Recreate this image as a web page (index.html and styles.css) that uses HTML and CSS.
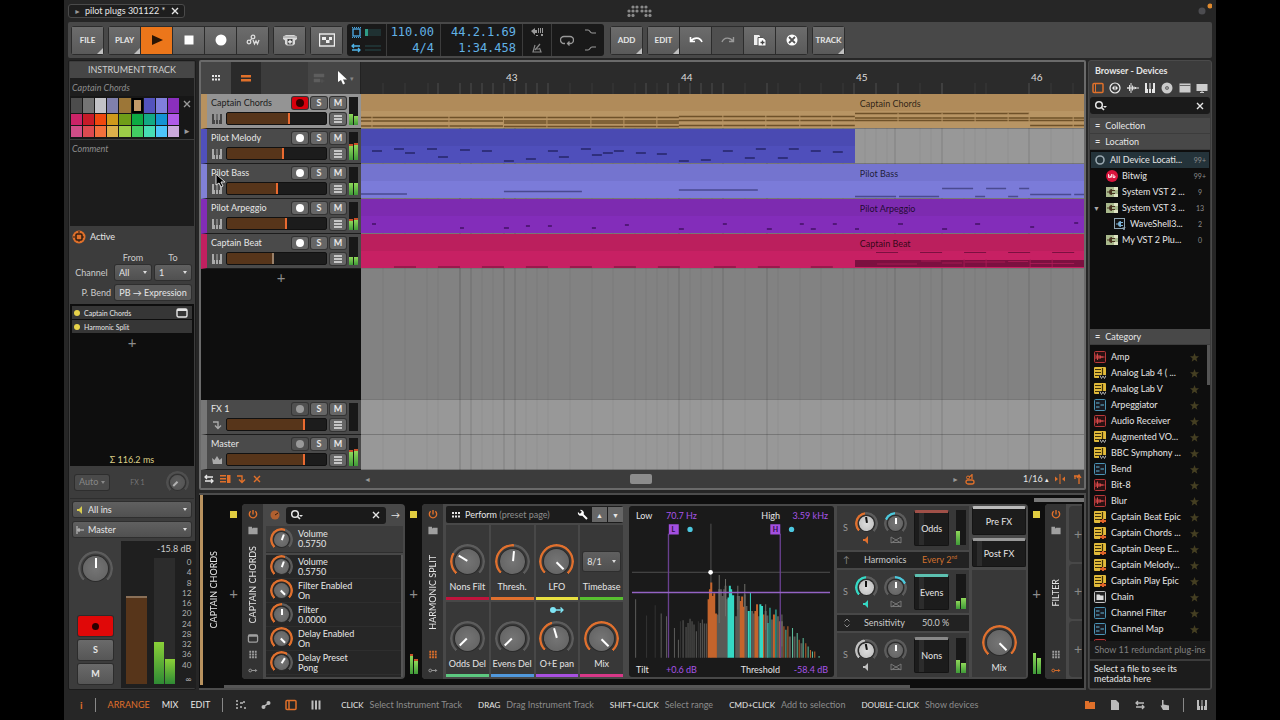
FILE: index.html
```html
<!DOCTYPE html>
<html lang="en">
<head>
<meta charset="utf-8">
<title>pilot plugs 301122</title>
<link rel="stylesheet" href="styles.css">
</head>
<body>
<svg class="defs" aria-hidden="true">
  <symbol id="keys" viewBox="0 0 12 12"><path d="M1 1h2v6h1v4H1zM5 7h.5V1h1v6H7v4H5zM9 1h2v10H8V7h1z" fill="currentColor"/></symbol>
  <symbol id="folder" viewBox="0 0 12 12"><path d="M1 2h4v1.500h1V3h5v7H1z" fill="currentColor"/></symbol>
  <symbol id="power" viewBox="0 0 12 12"><path d="M6 1v5M3.500 2.500a4 4 0 1 0 5 0" fill="none" stroke="currentColor" stroke-width="1.500"/></symbol>
  <symbol id="search" viewBox="0 0 14 12"><circle cx="5" cy="5" r="3.300" fill="none" stroke="currentColor" stroke-width="1.500"/><path d="M7 7l3 3" stroke="currentColor" stroke-width="1.600"/><path d="M9 6h4l-2 2z" fill="currentColor"/></symbol>
  <symbol id="cross" viewBox="0 0 12 12"><path d="M3 3l6 6M9 3l-6 6" stroke="currentColor" stroke-width="1.400"/></symbol>
  <symbol id="window" viewBox="0 0 12 12"><rect x="1" y="2" width="10" height="8" rx="1.500" fill="none" stroke="currentColor" stroke-width="1.400"/><path d="M1 3h10" stroke="currentColor" stroke-width="2"/></symbol>
  <symbol id="dots" viewBox="0 0 12 12"><path d="M2 2h2v2H2zM5 2h2v2H5zM8 2h2v2H8zM2 5h2v2H2zM5 5h2v2H5zM8 5h2v2H8zM2 8h2v2H2zM5 8h2v2H5zM8 8h2v2H8z" fill="currentColor"/></symbol>
  <symbol id="grid6" viewBox="0 0 12 12"><path d="M2 3h2v2H2zM5 3h2v2H5zM8 3h2v2H8zM2 6.500h2v2H2zM5 6.500h2v2H5zM8 6.500h2v2H8z" fill="currentColor"/></symbol>
  <symbol id="link" viewBox="0 0 12 12"><circle cx="3" cy="6" r="1.500" fill="none" stroke="currentColor"/><path d="M4.500 6H10M8.500 4.500L10 6 8.500 7.500" fill="none" stroke="currentColor"/></symbol>
  <symbol id="bars" viewBox="0 0 12 12"><path d="M2 3h8M2 6h8M2 9h8" stroke="currentColor" stroke-width="1.500"/></symbol>
  <symbol id="down" viewBox="0 0 12 12"><path d="M2 3h5v6M4 6.500l3 3 3-3" fill="none" stroke="currentColor" stroke-width="1.400"/></symbol>
  <symbol id="swap" viewBox="0 0 12 12"><path d="M2 4h8M4 2L2 4l2 2M10 8H2M8 6l2 2-2 2" fill="none" stroke="currentColor" stroke-width="1.300"/></symbol>
  <symbol id="speaker" viewBox="0 0 8 8"><path d="M1 3h2l3-3v8L3 5H1z" fill="currentColor"/></symbol>
  <symbol id="pan" viewBox="0 0 12 8"><path d="M1 1v6l5-3zM11 1v6L6 4z" fill="none" stroke="currentColor"/><path d="M1 6h10v1H1z" fill="currentColor"/></symbol>
  <symbol id="star" viewBox="0 0 12 12"><path d="M6 0l1.600 4.200 4.400.2-3.400 2.800 1.200 4.300L6 9.100l-3.800 2.400 1.200-4.300L0 4.400l4.400-.2z" fill="currentColor"/></symbol>
  <symbol id="dev-audio" viewBox="0 0 12 12"><rect x=".5" y=".5" width="11" height="11" rx="1" fill="#2a1112" stroke="#b8393a"/><path d="M2 3.500V8M3.500 2.500V9M5 4v4M6.500 4.500v3M8 5v2M2 6h8.500" stroke="#d24646" fill="none"/></symbol>
  <symbol id="dev-note" viewBox="0 0 12 12"><rect x=".5" y=".5" width="11" height="11" rx="1" fill="#181b22" stroke="#4b93b4"/><path d="M2 4h3.500M2 8h3.500M6.500 6H10" stroke="#63b7da" stroke-width="1.200"/></symbol>
  <symbol id="dev-inst" viewBox="0 0 12 12"><rect width="12" height="11" rx="1" fill="#e0b93a"/><path d="M1 2.500h6M1 5.500h6M1 8.500h5M8.500 1v7" stroke="#3c300b" stroke-width="1.200"/><path d="M5 8h7v4H5z" fill="#111"/><path d="M6 8.500l1.500 3L9 9l1.500 2.500L12 8.500" fill="none" stroke="#aaa"/></symbol>
  <symbol id="dev-epic" viewBox="0 0 12 12"><rect width="12" height="12" rx="1" fill="#e0b93a"/><path d="M1 2.500h6M1 5.500h6M1 8.500h5M8.500 1v7" stroke="#3c300b" stroke-width="1.200"/><path d="M6 8h6v4H6z" fill="#2a1508"/><path d="M6 10h6M9 8v4" stroke="#e0642a" stroke-width="2"/></symbol>
  <symbol id="dev-chain" viewBox="0 0 12 12"><rect x=".5" y=".5" width="11" height="11" rx="1" fill="#222" stroke="#c4c4c4"/><path d="M2.500 3.500h3l1 1h3V9h-7z" fill="#ddd"/></symbol>
  <symbol id="vst" viewBox="0 0 12 12"><path d="M0 1h12v10H0z" fill="#a9b98c"/><path d="M8 1h4v3H8zM8 8h4v3H8z" fill="#dfe4c2"/><path d="M1 6h2M6 4.500h3M6 7.500h3" stroke="#4a3420"/><path d="M6 3v6a3 3 0 0 1 0-6z" fill="#4a3420"/></symbol>
</svg>

<div class="app">
  <header class="titlebar">
    <div class="tab"><span class="tab-play">►</span><span>pilot plugs 301122 *</span><button class="plain" aria-label="Close project"><svg class="ic"><use href="#cross"/></svg></button></div>
    <svg class="logo" viewBox="0 0 26 12" fill="#8a8a8a"><circle cx="6" cy="2" r="1.600"/><circle cx="10" cy="2" r="1.600"/><circle cx="15" cy="2" r="1.600"/><circle cx="19" cy="2" r="1.600"/><circle cx="2" cy="6" r="1.600"/><circle cx="6" cy="6" r="1.600"/><circle cx="10" cy="6" r="1.600"/><circle cx="15" cy="6" r="1.600"/><circle cx="19" cy="6" r="1.600"/><circle cx="23" cy="6" r="1.600"/><circle cx="2" cy="10.400" r="1.600"/><circle cx="6" cy="10.400" r="1.600"/><circle cx="19" cy="10.400" r="1.600"/><circle cx="23" cy="10.400" r="1.600"/></svg>
    <svg class="lights" viewBox="0 0 14 14"><circle cx="4" cy="8" r="3.500" fill="#4c4c50"/><circle cx="12" cy="3" r="2.500" fill="#e08a2e"/></svg>
  </header>

  <nav class="toolbar">
    <div class="group"><button class="tb more">FILE</button></div>
    <div class="group">
      <button class="tb more">PLAY</button>
      <button class="tb on" aria-label="Play"><svg viewBox="0 0 16 16"><path d="M3 3l11 5-11 5z" fill="#2a1505"/></svg></button>
      <button class="tb" aria-label="Stop"><svg viewBox="0 0 16 16"><path d="M3.500 3.500h9v9h-9z" fill="#fff"/></svg></button>
      <button class="tb" aria-label="Record"><svg viewBox="0 0 16 16"><circle cx="8" cy="8" r="5.500" fill="#fff"/></svg></button>
      <button class="tb" aria-label="Automation write"><svg viewBox="0 0 16 16" fill="none" stroke="#ddd" stroke-width="1.300"><circle cx="4" cy="10" r="1.800"/><circle cx="8" cy="5" r="1.800"/><path d="M5.200 8.600l1.600-2.200M8 8l1.500 4L11 9l1.500 3L14 8"/></svg></button>
    </div>
    <div class="group"><button class="tb" aria-label="Launcher overdub"><svg viewBox="0 0 16 16"><path d="M1 4.500L4 3h8l3 1.500V7l-2 1.500V12l-2 1.500H5L3 12V8.500L1 7z" fill="#d8d8d8"/><path d="M1 5h14" stroke="#999"/><path d="M5.500 7h5v5.500h-5z" fill="#444"/><path d="M8 7.800v4M6 9.800h4" stroke="#fff" stroke-width="1.200"/></svg></button></div>
    <div class="group"><button class="tb" aria-label="Panels"><svg viewBox="0 0 16 16"><rect x=".5" y="2" width="15" height="12" fill="none" stroke="#eee" stroke-width="1.400"/><path d="M3 5h4v3h3V5h3v3h-2.500v3H7V8H3z" fill="#eee"/></svg></button></div>

    <div class="display">
      <div class="cell load"><svg viewBox="0 0 30 28"><rect x="2" y="3" width="7" height="7" fill="none" stroke="#4aa3dc" stroke-width="1.400"/><path d="M1 1.500h9M1 11.500h9" stroke="#4aa3dc" stroke-dasharray="1 1"/><path d="M1 20h8M3 18l-2 2 2 2M1 24h8M7 22l2 2-2 2" fill="none" stroke="#4fb4e8" stroke-width="1.300"/><path d="M14 3h16v7H14zM14 19h16v2H14zM14 23h16v2H14z" fill="#1f3132"/><path d="M14 3h3v7h-3z" fill="#2f9c86"/></svg></div>
      <div class="cell"><span>110.00</span><span>4/4</span></div>
      <div class="cell wide"><span>44.2.1.69</span><span>1:34.458</span></div>
      <div class="cell icons"><svg viewBox="0 0 14 12"><path d="M1 5l4-3v2h2v3H5v2zM8 2h1v5H8zM10 2h1v5h-1zM12 2h1v5h-1zM6 9h2v1H6zM11 8h2v2h-2z" fill="#999"/></svg><svg viewBox="0 0 14 12"><path d="M5 3L3 10h8L9.500 6M5 8l5-6M5 7h4" fill="none" stroke="#888" stroke-width="1.200"/></svg></div>
      <div class="cell loop"><svg viewBox="0 0 14 12"><path d="M5 9.500H4a3.500 3.500 0 0 1 0-7h6a3.500 3.500 0 0 1 0 7H8M9.500 7.500L7.500 9.500l2 2" fill="none" stroke="#999" stroke-width="1.300"/></svg><svg viewBox="0 0 12 28"><path d="M1 4h3c2 0 2 3 4 3h4M1 24h3c2 0 2-3 4-3h4" fill="none" stroke="#999" stroke-width="1.200"/></svg></div>
    </div>

    <div class="group"><button class="tb more">ADD</button></div>
    <div class="group">
      <button class="tb more">EDIT</button>
      <button class="tb" aria-label="Undo"><svg viewBox="0 0 16 16"><path d="M3 9c3-4 9-4 11 1M2.500 5v4.500H7" fill="none" stroke="#fff" stroke-width="1.600"/></svg></button>
      <button class="tb" aria-label="Redo" disabled><svg viewBox="0 0 16 16"><path d="M13 9C10 5 4 5 2 10M13.500 5v4.500H9" fill="none" stroke="#999" stroke-width="1.400"/></svg></button>
      <button class="tb" aria-label="Duplicate"><svg viewBox="0 0 16 16"><path d="M2 3h5l1 1v9H2z" fill="#eee"/><path d="M6 5.500h5l3 2.500v6H6z" fill="#fff" stroke="#555"/><path d="M10.500 8.500v4M8.500 10.500h4" stroke="#444" stroke-width="1.300"/></svg></button>
      <button class="tb" aria-label="Delete"><svg viewBox="0 0 16 16"><circle cx="8" cy="8" r="5.500" fill="#fff"/><path d="M5 5l6 6M11 5l-6 6" stroke="#555" stroke-width="1.800"/></svg></button>
    </div>
    <div class="group"><button class="tb more">TRACK</button></div>
  </nav>

  <main class="work">
    <aside class="inspector">
      <h2>INSTRUMENT TRACK</h2>
      <input class="track-title" aria-label="Track name" value="Captain Chords">
      <div class="palette">
        <div class="swatches">
          <i style="background:#4c4c4c"></i><i style="background:#747474"></i><i style="background:#c3c3c7"></i><i style="background:#8080ac"></i><i style="background:#9c7637"></i><i class="sel" style="background:#c39a68"></i><i style="background:#5353bd"></i><i style="background:#8080dc"></i><i style="background:#8a2fbe"></i>
          <i style="background:#cb2367"></i><i style="background:#c81a28"></i><i style="background:#f0480e"></i><i style="background:#cf9a1b"></i><i style="background:#6f9d18"></i><i style="background:#0daa43"></i><i style="background:#12aa84"></i><i style="background:#1493d4"></i><i style="background:#b05ae8"></i>
          <i style="background:#d04d87"></i><i style="background:#dd4a50"></i><i style="background:#f2703c"></i><i style="background:#dcb04b"></i><i style="background:#9ccc48"></i><i style="background:#42cc62"></i><i style="background:#47ddb4"></i><i style="background:#4dc5fb"></i><i style="background:#cbaadc"></i>
        </div>
        <div class="palette-side"><svg class="ic"><use href="#cross"/></svg><span>►</span></div>
      </div>
      <textarea class="comment" aria-label="Comment" placeholder="Comment"></textarea>
      <div class="active-row"><svg viewBox="0 0 14 14"><circle cx="7" cy="7" r="6.500" fill="#e0702a"/><rect x="4" y="4" width="6" height="6" rx="1" fill="none" stroke="#2c1a10" stroke-width="1.500"/><path d="M7 1.500v2M7 10.500v2M1.500 7h2M10.500 7h2" stroke="#2c1a10" stroke-width="2" stroke-dasharray="1"/></svg><span>Active</span></div>
      <div class="routing">
        <span></span><span class="mid">From</span><span class="mid">To</span>
        <span class="lab">Channel</span>
        <label class="drop"><select aria-label="Channel from"><option>All</option></select></label>
        <label class="drop"><select aria-label="Channel to"><option>1</option></select></label>
        <span class="lab low">P. Bend</span><button class="bend low">PB → Expression</button>
      </div>
      <div class="chain">
        <div class="chain-row"><i></i><span>Captain Chords</span><svg class="ic"><use href="#window"/></svg></div>
        <div class="chain-row"><i></i><span>Harmonic Split</span></div>
        <button class="plus">+</button>
        <div class="latency">Σ 116.2 ms</div>
      </div>
      <div class="send">
        <label class="drop dim"><select aria-label="Send mode"><option>Auto</option></select></label>
        <span>FX 1</span>
        <label class="knob s faded" style="--e:0;--p:0"><input type="range" aria-label="FX 1 send"></label>
      </div>
      <div class="io">
        <label class="drop in"><svg class="io-ic yellow"><use href="#speaker"/></svg><select aria-label="Input"><option>All ins</option></select></label>
        <label class="drop"><svg class="io-ic" viewBox="0 0 8 8"><path d="M1 0v8M1 4h7M3 2v4" stroke="#ccc" fill="none"/></svg><select aria-label="Output"><option>Master</option></select></label>
      </div>
      <div class="mixer">
        <div class="mix-left">
          <label class="knob l" style="--e:0;--p:.5"><input type="range" aria-label="Pan"></label>
          <button class="arm" aria-label="Arm"></button>
          <button class="sm">S</button>
          <button class="sm">M</button>
        </div>
        <div class="mix-right">
          <div class="db">-15.8 dB</div>
          <div class="mix-cols">
            <div class="vol"></div>
            <div class="bigmeter"><i style="height:33%"></i><i style="height:20%"></i></div>
            <ol class="scale"><li>0</li><li>4</li><li>8</li><li>12</li><li>16</li><li>20</li><li>24</li><li>28</li><li>32</li><li>36</li><li>40</li><li>∞</li></ol>
          </div>
        </div>
      </div>
    </aside>

    <section class="center">
      <div class="arranger">
        <div class="arr-head">
          <div class="head-tools">
            <button aria-label="Clip launcher"><svg class="ic"><use href="#grid6"/></svg></button>
            <button class="lit" aria-label="Arranger"><svg class="ic" viewBox="0 0 12 12"><path d="M1 3h10v2.500H1zM1 7h10v2.500H1z" fill="currentColor"/></svg></button>
            <span class="fill"></span>
            <button class="faint" aria-label="Follow"><svg class="ic" viewBox="0 0 12 12"><path d="M1 2h10v3H1zM1 7h6v3H1zM9 7v4M7.500 9h4" fill="currentColor" stroke="currentColor" stroke-width=".5"/></svg></button>
            <button class="pointer" aria-label="Pointer tool"><svg viewBox="0 0 12 14"><path d="M2 0v11l3-2 2 4.500 2-1L7 8.500h4z" fill="#fff"/></svg><small>▾</small></button>
          </div>
          <div class="ruler">
            <div class="bars"><span></span><span>43</span><span>44</span><span>45</span><span>46</span></div>
            <svg viewBox="0 0 723 12" preserveAspectRatio="none"><path d="M22 0v12M44 0v12M67 0v12M209 0v12M231 0v12M252 0v12M274 0v12M296 0v12M384 0v12M417 0v12M439 0v12M460 0v12M482 0v12M559 0v12M581 0v12M614 0v12M625 0v12M690 0v12M712 0v12" stroke="#3c3c3c"/><path d="M77 0v12M99 0v12M110 0v12M121 0v12M132 0v12M143 0v12M154 0v12M165 0v12M176 0v12M187 0v12M285 0v12M307 0v12M318 0v12M329 0v12M340 0v12M351 0v12M362 0v12M406 0v12M493 0v12M515 0v12M537 0v12M581 0v12M668 0v12" stroke="#505050"/></svg>
          </div>
        </div>

        <div class="arr-body">
          <div class="tracks">
            <div class="track selected" style="--c:#b8925f"><span class="tname">Captain Chords</span><button class="rec armed" aria-label="Arm"></button><button>S</button><button>M</button><svg class="tic"><use href="#keys"/></svg><input type="range" class="fader" aria-label="Volume" value="63" style="--v:63%"><button aria-label="Menu"><svg class="ic"><use href="#bars"/></svg></button><div class="meter"><i style="height:40%"></i><i style="height:32%"></i></div></div>
            <div class="track" style="--c:#5050bb"><span class="tname">Pilot Melody</span><button class="rec" aria-label="Arm"></button><button>S</button><button>M</button><svg class="tic"><use href="#keys"/></svg><input type="range" class="fader" aria-label="Volume" value="57" style="--v:57%"><button aria-label="Menu"><svg class="ic"><use href="#bars"/></svg></button><div class="meter hot"><i style="height:58%"></i><i style="height:60%"></i></div></div>
            <div class="track" style="--c:#8080d6"><span class="tname">Pilot Bass</span><button class="rec" aria-label="Arm"></button><button>S</button><button>M</button><svg class="tic"><use href="#keys"/></svg><input type="range" class="fader" aria-label="Volume" value="51" style="--v:51%"><button aria-label="Menu"><svg class="ic"><use href="#bars"/></svg></button><div class="meter"><i style="height:42%"></i><i style="height:42%"></i></div>
              <svg class="cursor" viewBox="0 0 12 15"><path d="M1 1v11l3-2 2 4 2-1-2-4h4z" fill="#000" stroke="#ddd"/></svg></div>
            <div class="track" style="--c:#822db8"><span class="tname">Pilot Arpeggio</span><button class="rec" aria-label="Arm"></button><button>S</button><button>M</button><svg class="tic"><use href="#keys"/></svg><input type="range" class="fader" aria-label="Volume" value="60" style="--v:60%"><button aria-label="Menu"><svg class="ic"><use href="#bars"/></svg></button><div class="meter hot"><i style="height:38%"></i><i style="height:42%"></i></div></div>
            <div class="track" style="--c:#c22060"><span class="tname">Captain Beat</span><button class="rec" aria-label="Arm"></button><button>S</button><button>M</button><svg class="tic"><use href="#keys"/></svg><input type="range" class="fader grey" aria-label="Volume" value="46" style="--v:46%"><button aria-label="Menu"><svg class="ic"><use href="#bars"/></svg></button><div class="meter"><i style="height:30%"></i><i style="height:28%"></i></div></div>
            <button class="plus add-track">+</button>
            <div class="track" style="--c:#777"><span class="tname">FX 1</span><button class="rec off" aria-label="Arm"></button><button>S</button><button>M</button><svg class="tic"><use href="#down"/></svg><input type="range" class="fader" aria-label="Volume" value="78" style="--v:78%"><button aria-label="Menu"><svg class="ic"><use href="#bars"/></svg></button><div class="meter"></div></div>
            <div class="track" style="--c:#777"><span class="tname">Master</span><button class="rec off" aria-label="Arm"></button><button>S</button><button>M</button><svg class="tic" viewBox="0 0 12 12"><path d="M1 4l2.500 2L6 2l2.500 4L11 4v6H2z" fill="currentColor"/></svg><input type="range" class="fader" aria-label="Volume" value="78" style="--v:78%"><button aria-label="Menu"><svg class="ic"><use href="#bars"/></svg></button><div class="meter hot"><i style="height:56%"></i><i style="height:60%"></i></div></div>
          </div>

          <div class="timeline">
            <svg class="gridlines" viewBox="0 0 723 100" preserveAspectRatio="none"><path d="M22 0v100M44 0v100M66 0v100M77 0v100M99 0v100M121 0v100M132 0v100M165 0v100M176 0v100M187 0v100M209 0v100M231 0v100M252 0v100M274 0v100M285 0v100M296 0v100M307 0v100M329 0v100M340 0v100M351 0v100M384 0v100M417 0v100M439 0v100M460 0v100M482 0v100M493 0v100M504 0v100M515 0v100M526 0v100M559 0v100M570 0v100M603 0v100M614 0v100M625 0v100M647 0v100M690 0v100M712 0v100" stroke="#000" stroke-opacity=".05"/><path d="M99 0v100M110 0v100M143 0v100M154 0v100M318 0v100M362 0v100M406 0v100M534 0v100M581 0v100M668 0v100" stroke="#000" stroke-opacity=".15"/></svg>
            <div class="lane">
              <div class="clip a" style="--c:#b89564;--h:#b08b5a"><b></b><svg viewBox="0 0 494 17" preserveAspectRatio="none"><path d="M0 6.500H142M0 10H142M0 15H142M143 6.500H318M143 10H318M143 12H318M143 15.500H318M318 5.500H494M318 9.500H494M318 14.500H494" stroke="#6e5129" stroke-width="1.300"/><path d="M11 5v12M88 5v12M186 5v12M230 5v12M263 5v12M296 5v12M362 4v13M405 4v13M439 4v13M471 4v13" stroke="#b89564"/></svg></div>
              <div class="clip b" style="--c:#b89564;--h:#b08b5a"><b>Captain Chords</b><svg viewBox="0 0 229 17" preserveAspectRatio="none"><path d="M0 2.500H174M0 7H229M0 9.500H229M175 14.500H229" stroke="#6e5129" stroke-width="1.400"/><path d="M43 2v12M87 2v12M120 2v12M153 2v12M174 2v14M218 5v12" stroke="#b89564"/></svg></div>
            </div>
            <div class="lane">
              <div class="clip a" style="--c:#4f4fbb;--h:#4a4ab2"><b></b><svg viewBox="0 0 494 17" preserveAspectRatio="none"><path d="M11 5h10M33 3h10M44 7h10M66 3h10M77 11h10M99 4h10M121 5h10M143 15h10M165 13h10M187 5h10M198 11h10M220 3h10M231 9h10M242 7h10M253 5h10M275 7h10M296 8h10M318 15h10M340 14h10M362 5h10M384 12h10M395 3h10M417 12h10M428 3h10M450 5h10M472 6h10" stroke="#26266a" stroke-width="1.300"/></svg></div>
            </div>
            <div class="lane">
              <div class="clip a" style="--c:#7b7bd9;--h:#7474cf"><b></b><svg viewBox="0 0 494 17" preserveAspectRatio="none"><path d="M0 13h46M143 10.500h78M318 9h79" stroke="#4a4a90" stroke-width="1.300"/></svg></div>
              <div class="clip b" style="--c:#7b7bd9;--h:#7474cf"><b>Pilot Bass</b><svg viewBox="0 0 229 17" preserveAspectRatio="none"><path d="M0 15.500h41M44 15.500h40M87 7.500h31M120 15.500h10M131 7.500h20M153 15.500h10M164 7.500h10M175 13.500h41M219 13.500h10" stroke="#4a4a90" stroke-width="1.500"/></svg></div>
            </div>
            <div class="lane">
              <div class="clip a" style="--c:#832dba;--h:#7d2bb0"><b></b><svg viewBox="0 0 494 17" preserveAspectRatio="none"><path d="M11 8h4M99 12h4M143 12h5M165 10h4M187 10h4M231 12h4M264 9h4M318 13h5M362 8h4M406 13h5M439 8h4M450 13h5M472 8h4" stroke="#431166" stroke-width="1.300"/></svg></div>
              <div class="clip b" style="--c:#832dba;--h:#7d2bb0"><b>Pilot Arpeggio</b><svg viewBox="0 0 229 17" preserveAspectRatio="none"><path d="M0 13h4M43 8h5M87 13h5M120 8h5M175 11h4M219 7h4" stroke="#431166" stroke-width="1.300"/></svg></div>
            </div>
            <div class="lane">
              <div class="clip a" style="--c:#c72063;--h:#bb1f5d"><b></b><svg viewBox="0 0 494 17" preserveAspectRatio="none"><path d="M33 16h22M77 16h22M121 16h22M165 16h22M209 16h22M253 16h22M297 16h22M353 16h22M397 16h22M450 16h22" stroke="#701038"/></svg></div>
              <div class="clip b" style="--c:#c72063;--h:#bb1f5d"><b>Captain Beat</b><svg viewBox="0 0 229 17" preserveAspectRatio="none"><path d="M0 9h229v7H0z" fill="#7c1040"/><path d="M21 1.500h22M65 1.500h22M109 1.500h22M153 1.500h22M197 1.500h22" stroke="#7c1040"/><path d="M22 13h40M66 10h20M87 12h20M110 11h40M153 10.500h20M175 12.500h44M109 8v8M131 8v8M175 8v8M197 8v8" stroke="#b31c58" stroke-width=".8"/></svg></div>
            </div>
            <div class="void"></div>
            <div class="lane"></div>
            <div class="lane"></div>
          </div>
        </div>

        <div class="arr-foot">
          <div class="foot-tools"><svg class="ic"><use href="#swap"/></svg><svg class="ic lit" viewBox="0 0 12 12"><path d="M1 2h6v1.500H1zM1 5h6v1.500H1zM1 8h6v1.500H1zM8 2h3.500v8H8z" fill="currentColor"/></svg><svg class="ic lit"><use href="#down"/></svg><svg class="ic lit"><use href="#cross"/></svg></div>
          <span class="arrow">◄</span><div class="hscroll"><i></i></div><span class="arrow">►</span>
          <svg class="ic lit" viewBox="0 0 12 12"><rect x="2" y="7" width="8" height="4" rx="2" fill="none" stroke="currentColor" stroke-width="1.300"/><circle cx="4" cy="4.500" r="1.500" fill="none" stroke="currentColor"/><path d="M5 4l3-2M8 1v5" fill="none" stroke="currentColor" stroke-width="1.300"/></svg>
          <span class="snap">1/16 <small>▴</small></span>
          <svg class="ic lit" viewBox="0 0 12 12"><path d="M5.500 1h1v10h-1zM1 3.500L4 6 1 8.500zM11 3.500L8 6l3 2.500z" fill="currentColor"/></svg>
          <svg class="ic lit" viewBox="0 0 12 12"><path d="M3 3h5v8M6 5l2-3 2 3M4 3v3" fill="none" stroke="currentColor" stroke-width="1.300"/></svg>
        </div>
      </div>

      <div class="devices">
        <i class="minimap"></i>
        <div class="rack">
          <div class="rack-name"><span class="vert">CAPTAIN CHORDS</span></div>
          <div class="slot"><i class="led"></i><button class="plus">+</button><div class="meter none"></div></div>

          <article class="device">
            <div class="spine"><svg class="ic lit"><use href="#power"/></svg><svg class="ic"><use href="#folder"/></svg><span class="vert">CAPTAIN CHORDS</span><svg class="ic"><use href="#window"/></svg><svg class="ic"><use href="#dots"/></svg><svg class="ic"><use href="#link"/></svg></div>
            <div class="plugin">
              <div class="psearch"><svg class="ic lit" viewBox="0 0 12 12"><circle cx="6" cy="6" r="4.500" fill="#b06030"/><path d="M6 6l3-2" stroke="#3a1c0a"/></svg><label class="sbox"><svg class="sic"><use href="#search"/></svg><input type="search" aria-label="Search parameters"><svg class="ic"><use href="#cross"/></svg></label><span>→</span></div>
              <div class="param first"><label class="knob s" style="--e:.575;--p:.575"><input type="range" aria-label="Volume"></label><span>Volume<br>0.5750</span></div>
              <div class="params">
                <div class="param"><label class="knob s" style="--e:.575;--p:.575"><input type="range" aria-label="Volume"></label><span>Volume<br>0.5750</span></div>
                <div class="param"><label class="knob s" style="--e:1;--p:1"><input type="range" aria-label="Filter Enabled"></label><span>Filter Enabled<br>On</span></div>
                <div class="param"><label class="knob s" style="--e:.5;--p:.5"><input type="range" aria-label="Filter"></label><span>Filter<br>0.0000</span></div>
                <div class="param"><label class="knob s" style="--e:1;--p:1"><input type="range" aria-label="Delay Enabled"></label><span>Delay Enabled<br>On</span></div>
                <div class="param"><label class="knob s" style="--e:.62;--p:.62"><input type="range" aria-label="Delay Preset"></label><span>Delay Preset<br>Pong</span></div>
              </div>
            </div>
          </article>

          <div class="slot"><i class="led"></i><button class="plus">+</button><div class="meter none hot"><i style="height:90%"></i><i style="height:70%"></i></div></div>

          <article class="device grow">
            <div class="spine"><svg class="ic lit"><use href="#power"/></svg><svg class="ic"><use href="#folder"/></svg><span class="vert">HARMONIC SPLIT</span><svg class="ic lit"><use href="#dots"/></svg><svg class="ic"><use href="#link"/></svg></div>
            <div class="remote">
              <div class="page"><svg class="ic"><use href="#grid6"/></svg><span>Perform <em>(preset page)</em></span><svg class="ic" viewBox="0 0 12 12"><path d="M4 4l6 6" stroke="#fff" stroke-width="2"/><path d="M1 3l2 2 2-2-2-2a3 3 0 1 1-2 2z" fill="#fff"/></svg><button>▲</button><button>▼</button></div>
              <div class="pads">
                <div class="pad" style="--u:#c0143c"><label class="knob l" style="--e:.28;--p:.28"><input type="range" aria-label="Nons Filt"></label><span>Nons Filt</span></div>
                <div class="pad" style="--u:#e0702e"><label class="knob l" style="--e:.52;--p:.52"><input type="range" aria-label="Thresh."></label><span>Thresh.</span></div>
                <div class="pad" style="--u:#e8e040"><label class="knob l" style="--e:1;--p:1"><input type="range" aria-label="LFO"></label><span>LFO</span></div>
                <div class="pad" style="--u:#58c030"><label class="drop time"><select aria-label="Timebase"><option>8/1</option></select></label><span>Timebase</span></div>
                <div class="pad" style="--u:#5cc880"><label class="knob l" style="--e:0;--p:0"><input type="range" aria-label="Odds Delay"></label><span>Odds Del</span></div>
                <div class="pad" style="--u:#5098dc"><label class="knob l" style="--e:0;--p:0"><input type="range" aria-label="Evens Delay"></label><span>Evens Del</span></div>
                <div class="pad" style="--u:#a850e0"><svg class="mod" viewBox="0 0 14 6"><circle cx="3" cy="3" r="3" fill="#7fe4f4"/><path d="M3 3h10M10.500 .5L13 3l-2.500 2.500" fill="none" stroke="#7fe4f4" stroke-width="1.300"/></svg><label class="knob l" style="--e:.44;--p:.44"><input type="range" aria-label="O+E pan"></label><span>O+E pan</span></div>
                <div class="pad" style="--u:#d83888"><label class="knob l" style="--e:1;--p:1"><input type="range" aria-label="Mix"></label><span>Mix</span></div>
              </div>
            </div>
            <div class="spectrum">
              <div class="srow"><span>Low</span><output>70.7 Hz</output><span class="r">High</span><output>3.59 kHz</output></div>
              <svg viewBox="15 104 618 406" preserveAspectRatio="none">
                <path d="M262 106V503M24 250H621" stroke="#6a6a6a" stroke-width="2"/>
                <g stroke-width="3" fill="none">
                  <path stroke="#333" d="M68 378V503M94 348V503M170 395V503M224 395V503M343 350V503"/>
                  <path stroke="#5c5c5a" d="M35 330V503M112 372V503M128 380V503M152 415V503M164 450V503M178 392V503M187 412V503M193 400V503M199 388V503M205 395V503M211 405V503M218 425V503M230 400V503M236 390V503M242 402V503M248 402V503"/>
                  <path stroke="#5a5955" stroke-width="6" d="M282 375V503M287 300V503M292 300V503M297 320V503M302 300V503M306 290V503M310 330V503M338 380V503M343 320V503M347 320V503M364 315V503M369 350V503M386 365V503M391 372V503M406 380V503M427 365V503M432 378V503M446 390V503M464 380V503M476 395V503M500 440V503M514 440V503M535 460V503"/>
                  <path stroke="#6e6d68" d="M287 258V400M306 270V380M343 290V360M364 285V360M427 345V420M476 375V470"/>
                  <path stroke="#c4642c" stroke-width="6" d="M255 330V503M259 300V503M263 280V503M268 320V503M272 312V503M277 372V503M352 335V503M356 322V503M360 352V503M396 365V503M401 345V503M420 375V503M452 375V503M470 395V503"/>
                  <path stroke="#35d8c4" stroke-width="6" d="M315 325V503M319 290V503M323 300V503M329 318V503M376 365V503M411 345V503M416 350V503"/>
                  <path stroke="#35d8c4" d="M381 310V503M440 355V503M458 360V503M434 400V503"/>
                  <path stroke="#c4642c" d="M482 410V503M494 410V503M528 450V503M548 460V503M562 480V503M575 485V503"/>
                  <path stroke="#5fc4a2" d="M488 420V503M508 415V503M522 430V503M540 445V503M555 470V503M568 485V503M588 498V503"/>
                </g>
                <path d="M134 136V503M471 136V503" stroke="#69408f" stroke-width="4"/>
                <path d="M24 310H621" stroke="#9463c4" stroke-width="4"/>
                <path d="M135 108h30v30h-30zM441 108h30v30h-30z" fill="#a34fe0"/>
                <text x="143" y="131">L</text><text x="448" y="131">H</text>
                <circle cx="199" cy="123" r="8" fill="#4cc8e0"/><circle cx="505" cy="123" r="8" fill="#4cc8e0"/><circle cx="261" cy="250" r="7" fill="#fff"/>
              </svg>
              <div class="srow"><span>Tilt</span><output>+0.6 dB</output><span class="r">Threshold</span><output>-58.4 dB</output></div>
            </div>
            <div class="bands">
              <div class="band" style="--k:#e0702e"><button class="solo">S</button><div class="kb"><label class="knob s white" style="--e:.47;--p:.47"><input type="range" aria-label="Odds level"></label><svg><use href="#speaker"/></svg></div><div class="kb"><label class="knob s pan" style="--s:.25;--e:.5;--p:.5"><input type="range" aria-label="Odds pan"></label><svg class="panic"><use href="#pan"/></svg></div><button class="layer" style="--t:#a05048">Odds</button><div class="meter"><i style="height:42%"></i><i style="height:0"></i></div></div>
              <div class="brow"><span class="bi">↑</span><span>Harmonics</span><span class="org">Every 2<sup>nd</sup></span></div>
              <div class="band" style="--k:#35d8c4"><button class="solo">S</button><div class="kb"><label class="knob s white" style="--e:.5;--p:.5"><input type="range" aria-label="Evens level"></label><svg><use href="#speaker"/></svg></div><div class="kb"><label class="knob s pan" style="--s:.5;--e:.75;--p:.5"><input type="range" aria-label="Evens pan"></label><svg class="panic"><use href="#pan"/></svg></div><button class="layer" style="--t:#5cc0b0">Evens</button><div class="meter"><i style="height:22%"></i><i style="height:32%"></i></div></div>
              <div class="brow"><svg class="updown" viewBox="0 0 8 12"><path d="M1.500 4.500L4 2l2.500 2.500M1.500 7.500L4 10l2.500-2.500" fill="none" stroke="#888"/></svg><span>Sensitivity</span><span>50.0 %</span></div>
              <div class="band" style="--k:#c0c0c0"><button class="solo">S</button><div class="kb"><label class="knob s white" style="--e:.46;--p:.46"><input type="range" aria-label="Nons level"></label><svg><use href="#speaker"/></svg></div><div class="kb"><label class="knob s pan" style="--e:0;--p:.5"><input type="range" aria-label="Nons pan"></label><svg class="panic"><use href="#pan"/></svg></div><button class="layer" style="--t:#888">Nons</button><div class="meter"><i style="height:36%"></i><i style="height:28%"></i></div></div>
            </div>
            <div class="fxcol">
              <button class="layer flat" style="--t:#bbb">Pre FX</button>
              <button class="layer" style="--t:#999">Post FX</button>
              <div class="mixbox"><label class="knob l" style="--e:1;--p:1"><input type="range" aria-label="Mix"></label><span>Mix</span></div>
            </div>
          </article>

          <div class="slot"><i class="led"></i><button class="plus">+</button><div class="meter none"><i style="height:95%"></i><i style="height:75%"></i></div></div>

          <article class="device cut">
            <div class="spine"><svg class="ic lit"><use href="#power"/></svg><svg class="ic"><use href="#folder"/></svg><span class="vert">FILTER</span><svg class="ic"><use href="#dots"/></svg><svg class="ic lit"><use href="#link"/></svg></div>
            <div class="stubs"><span>+</span><span>+</span><span>+</span></div>
          </article>
        </div>
        <div class="rackscroll"><i></i></div>
      </div>
    </section>

    <aside class="browser">
      <h2>Browser - Devices</h2>
      <div class="kinds">
        <button class="sel" aria-label="Devices"><svg viewBox="0 0 12 12"><rect x="1" y="1.500" width="10" height="9" rx="1" fill="none" stroke="#e0702a" stroke-width="1.500"/><path d="M3.500 2v8" stroke="#e0702a"/></svg></button>
        <button aria-label="Presets"><svg viewBox="0 0 12 12"><circle cx="6" cy="6" r="5" fill="none" stroke="#eee" stroke-width="1.200"/><path d="M5.500 3.500v5L3 6zM6.500 3.500v5L9 6z" fill="#eee"/></svg></button>
        <button aria-label="Samples"><svg viewBox="0 0 12 12"><path d="M1 5v2M2.500 3v6M4 1v10M5.500 3.500v5M7 4.500v3M8.500 5v2M0 6h12" stroke="#ddd"/></svg></button>
        <button aria-label="Multisamples"><svg><use href="#keys"/></svg></button>
        <button aria-label="Music"><svg viewBox="0 0 12 12"><circle cx="6" cy="6" r="5.500" fill="#ccc"/><circle cx="6" cy="6" r="1.800" fill="#444"/><circle cx="6" cy="6" r=".8" fill="#eee"/></svg></button>
        <button aria-label="Clips"><svg viewBox="0 0 12 12"><path d="M.5 1.500h11v9H.5z" fill="#ccc"/><path d="M.5 3.500h11" stroke="#666"/></svg></button>
        <button aria-label="Files"><svg viewBox="0 0 12 12"><path d="M.5 2h11v7H.5zM4 10h4v1H4z" fill="#ccc"/><path d="M5.500 8.500h1V11h-1z" fill="#ccc"/></svg></button>
      </div>
      <label class="sbox"><svg class="sic"><use href="#search"/></svg><input type="search" aria-label="Search browser"><svg class="ic"><use href="#cross"/></svg></label>
      <h3><i>=</i>Collection</h3>
      <h3><i>=</i>Location</h3>
      <ul class="locations">
        <li class="sel"><svg viewBox="0 0 12 12"><circle cx="6" cy="6" r="4" fill="none" stroke="#9aa8b0" stroke-width="1.600"/></svg><span>All Device Locati...</span><small>99+</small></li>
        <li class="in1"><svg viewBox="0 0 12 12"><circle cx="6" cy="6" r="6" fill="#d8143c"/><path d="M2.500 4v3.500h2V6h-2M5.500 4v3.500M7 4v3.500h2V6H7" fill="none" stroke="#fff" stroke-width=".8"/></svg><span>Bitwig</span><small>99+</small></li>
        <li class="in1"><svg><use href="#vst"/></svg><span>System VST 2 ...</span><small>9</small></li>
        <li class="in1 open"><svg><use href="#vst"/></svg><span>System VST 3 ...</span><small>13</small></li>
        <li class="in2"><svg viewBox="0 0 12 12"><rect x=".5" y=".5" width="10" height="10" fill="#111" stroke="#8fa6b4"/><path d="M2 6h2M7 4.500h2M7 7.500h2" stroke="#7db4d8"/><path d="M7 3v6a3 3 0 0 1 0-6z" fill="#7db4d8"/><path d="M9 9l1 3 1-3" stroke="#8fa6b4" fill="none"/></svg><span>WaveShell3...</span><small>2</small></li>
        <li class="in1"><svg><use href="#vst"/></svg><span>My VST 2 Plu...</span><small>0</small></li>
      </ul>
      <h3><i>=</i>Category</h3>
      <div class="catbox">
        <ul class="cats">
          <li><svg><use href="#dev-audio"/></svg><span>Amp</span><svg class="st"><use href="#star"/></svg></li>
          <li><svg><use href="#dev-inst"/></svg><span>Analog Lab 4 ( ...</span><svg class="st"><use href="#star"/></svg></li>
          <li><svg><use href="#dev-inst"/></svg><span>Analog Lab V</span><svg class="st"><use href="#star"/></svg></li>
          <li><svg><use href="#dev-note"/></svg><span>Arpeggiator</span><svg class="st"><use href="#star"/></svg></li>
          <li><svg><use href="#dev-audio"/></svg><span>Audio Receiver</span><svg class="st"><use href="#star"/></svg></li>
          <li><svg><use href="#dev-inst"/></svg><span>Augmented VO...</span><svg class="st"><use href="#star"/></svg></li>
          <li><svg><use href="#dev-inst"/></svg><span>BBC Symphony ...</span><svg class="st"><use href="#star"/></svg></li>
          <li><svg><use href="#dev-note"/></svg><span>Bend</span><svg class="st"><use href="#star"/></svg></li>
          <li><svg><use href="#dev-audio"/></svg><span>Bit-8</span><svg class="st"><use href="#star"/></svg></li>
          <li><svg><use href="#dev-audio"/></svg><span>Blur</span><svg class="st"><use href="#star"/></svg></li>
          <li><svg><use href="#dev-epic"/></svg><span>Captain Beat Epic</span><svg class="st"><use href="#star"/></svg></li>
          <li><svg><use href="#dev-epic"/></svg><span>Captain Chords ...</span><svg class="st"><use href="#star"/></svg></li>
          <li><svg><use href="#dev-epic"/></svg><span>Captain Deep E...</span><svg class="st"><use href="#star"/></svg></li>
          <li><svg><use href="#dev-epic"/></svg><span>Captain Melody...</span><svg class="st"><use href="#star"/></svg></li>
          <li><svg><use href="#dev-epic"/></svg><span>Captain Play Epic</span><svg class="st"><use href="#star"/></svg></li>
          <li><svg><use href="#dev-chain"/></svg><span>Chain</span><svg class="st"><use href="#star"/></svg></li>
          <li><svg><use href="#dev-note"/></svg><span>Channel Filter</span><svg class="st"><use href="#star"/></svg></li>
          <li><svg><use href="#dev-note"/></svg><span>Channel Map</span><svg class="st"><use href="#star"/></svg></li>
          <li><svg><use href="#dev-audio"/></svg><span></span></li>
        </ul>
        <i class="vscroll"></i>
      </div>
      <button class="redundant">Show 11 redundant plug-ins</button>
      <p class="meta">Select a file to see its metadata here</p>
    </aside>
  </main>

  <footer class="status">
    <b class="info">i</b><i class="sep"></i>
    <button class="cur">ARRANGE</button><button>MIX</button><button>EDIT</button><i class="sep"></i>
    <div class="views">
      <svg viewBox="0 0 12 12"><path d="M1 2h2M1 5.500h2M1 9h2M5 4h3M5 8h2M9 2v2M9 9h2" stroke="#bbb" stroke-width="1.500"/></svg>
      <svg viewBox="0 0 12 12"><circle cx="3.500" cy="8" r="2" fill="#bbb"/><circle cx="8.500" cy="4" r="2" fill="#bbb"/><path d="M3 8l6-4" stroke="#bbb" stroke-width="1.500"/></svg>
      <svg viewBox="0 0 12 12"><rect x="1" y="1.500" width="10" height="9" rx="1" fill="none" stroke="#e0702a" stroke-width="1.500"/><path d="M4 2v8" stroke="#e0702a" stroke-width="1.500"/></svg>
      <svg viewBox="0 0 12 12"><path d="M1.500 1.500h2v9h-2zM5 1.500h2v9H5zM8.500 1.500h2v9h-2z" fill="#bbb"/></svg>
    </div>
    <dl class="hints">
      <div><dt>CLICK</dt><dd>Select Instrument Track</dd></div>
      <div><dt>DRAG</dt><dd>Drag Instrument Track</dd></div>
      <div><dt>SHIFT+CLICK</dt><dd>Select range</dd></div>
      <div><dt>CMD+CLICK</dt><dd>Add to selection</dd></div>
      <div><dt>DOUBLE-CLICK</dt><dd>Show devices</dd></div>
    </dl>
    <div class="views right">
      <svg class="lit"><use href="#folder"/></svg>
      <svg viewBox="0 0 12 12"><path d="M2 1h5l3 3v7H2z" fill="#bbb"/></svg>
      <svg><use href="#swap"/></svg>
      <svg viewBox="0 0 12 12"><path d="M3 1h1.500v4.500L10 6.500V11H4L1.500 6.500H3z" fill="#bbb"/></svg>
    </div>
    <i class="sep"></i>
    <svg class="lastic"><use href="#keys"/></svg>
  </footer>
</div>
</body>
</html>
```
FILE: styles.css
```css
* { box-sizing: border-box; }
html, body { height: 100%; }
body { margin: 0; background: #000; color: #e6e6e6; font: 9px/12px Lato, sans-serif; }
button, input, select, textarea { font: inherit; color: inherit; margin: 0; padding: 0; border: 0; background: none; }
button { display: flex; align-items: center; justify-content: center; }
h2, h3, ul, ol, dl, dd, p { margin: 0; padding: 0; font-size: 9px; font-weight: 400; list-style: none; }
small { font-size: 7px; }
svg { display: block; flex: none; }
input[type=search], select, input[type=range] { appearance: none; outline: none; }
.defs { position: absolute; width: 0; height: 0; }
.ic { width: 12px; height: 12px; }
.lit { color: #e0702a; }

.app { display: flex; flex-direction: column; width: 90%; min-height: 100%; margin: 0 auto; padding: 0 4px; background: #262626; }

/* title bar */
.titlebar { display: grid; grid-template-columns: 1fr auto 1fr; align-items: center; height: 22px; }
.tab { display: flex; align-items: center; gap: 4px; justify-self: start; height: 14px; padding: 0 3px 0 5px; border: 1px solid #4a4a4a; border-radius: 3px; background: #1e1e1e; }
.tab-play { font-size: 7px; color: #999; }
.logo { width: 26px; height: 12px; }
.lights { width: 14px; height: 14px; justify-self: end; align-self: start; margin-top: 3px; }

/* transport */
.toolbar { display: flex; align-items: center; gap: 4px; height: 36px; padding: 0 3px; background: #484848; border-radius: 2px; }
.group { display: flex; gap: 1px; background: #2c2c2c; border: 1px solid #2c2c2c; border-radius: 3px; }
.tb { position: relative; width: 31px; height: 27px; background: linear-gradient(#6c6c6c, #5a5a5a); font-weight: 700; font-size: 8px; }
.tb svg { width: 16px; height: 16px; }
.tb.on { background: #ec761a; }
.tb:disabled { background: #4f4f4f; }
.tb.more::after { content: ""; position: absolute; right: 0; bottom: 0; border: 3px solid; border-color: transparent #c0c0c0 #c0c0c0 transparent; }
.display { display: flex; height: 32px; margin-right: 2px; background: #191919; border-radius: 3px; }
.cell { display: flex; flex-direction: column; justify-content: center; align-items: flex-end; width: 54px; padding: 0 6px; border-right: 1px solid #3c3c3c; color: #62b2e6; font: 12px/16px "DejaVu Sans Mono", monospace; }
.cell.load { width: 40px; padding: 0 5px; }
.cell.load svg { width: 30px; height: 28px; }
.cell.wide { width: 82px; }
.cell.icons { width: 29px; align-items: center; gap: 4px; }
.cell.icons svg { width: 14px; height: 12px; }
.cell.loop { flex-direction: row; width: 52px; align-items: center; gap: 10px; border: 0; }
.cell.loop svg { height: 12px; width: 14px; }
.cell.loop svg + svg { height: 28px; width: 12px; }

.work { flex: 1; display: grid; grid-template-columns: 128px minmax(0, 1fr) 124px; gap: 2px; margin-top: 2px; min-height: 0; }

/* knobs */
.knob { display: block; position: relative; flex: none; width: 23px; height: 23px; --f: 4px; --s: 0; --k1: var(--k, #e0702e); }
.knob.l { width: 35px; height: 35px; --f: 5px; }
.knob::before { content: ""; position: absolute; inset: 0; border-radius: 50%; background: conic-gradient(from 225deg, #5c5c5c calc(var(--s) * 270deg), var(--k1) 0 calc(max(var(--e), var(--s)) * 270deg), #5c5c5c 0 270deg, transparent 0); mask: radial-gradient(farthest-side, transparent calc(100% - 3px), #000 calc(100% - 2px)); }
.knob::after { content: ""; position: absolute; inset: var(--f); border-radius: 50%; background: linear-gradient(#fff, #fff) 50% 2px / 2px 40% no-repeat, radial-gradient(#757575, #606060); box-shadow: 0 0 0 1px #2b2b2b; transform: rotate(calc((var(--p) - .5) * 270deg)); }
.knob.white::after { background: linear-gradient(#111, #111) 50% 1px / 2px 40% no-repeat, radial-gradient(#ddd, #bbb); }
.knob.pan { --k1: #4cc8dc; }
.knob.faded { opacity: .6; }
.knob input { position: absolute; inset: 0; width: 100%; height: 100%; opacity: 0; }

/* drop-downs */
.drop { position: relative; display: flex; align-items: center; height: 15px; border-radius: 2px; background: linear-gradient(#606060, #505050); box-shadow: 0 0 0 1px #2e2e2e; color: #e6e6e6; }
.drop select { flex: 1; min-width: 0; padding: 0 4px; }
.drop::after { content: ""; position: absolute; right: 4px; border: 2px solid transparent; border-top: 3px solid #ddd; border-bottom: 0; }

/* inspector */
.inspector { display: flex; flex-direction: column; padding: 1px; background: #3c3c3c; border: 1px solid #1c1c1c; border-radius: 2px; }
.inspector h2 { height: 16px; line-height: 16px; text-align: center; background: #464646; color: #d0d0d0; }
.track-title { height: 18px; padding: 0 2px; background: #1e1e1e; color: #8c8c8c; font-style: italic; }
.palette { display: flex; gap: 2px; padding: 2px 1px; background: #171717; height: 43px; }
.swatches { flex: 1; display: grid; grid-template-columns: repeat(9, 1fr); gap: 1px; }
.swatches .sel { border: 2px solid #000; }
.palette-side { display: flex; flex-direction: column; justify-content: space-between; align-items: center; width: 12px; color: #999; font-size: 8px; }
.comment { height: 86px; margin-top: 1px; padding: 3px 2px; background: #1c1c1c; resize: none; outline: none; }
.comment::placeholder { color: #8c8c8c; opacity: 1; font-style: italic; }
.active-row { display: flex; align-items: center; gap: 4px; height: 22px; padding: 0 2px; }
.active-row svg { width: 14px; height: 14px; }
.routing { display: grid; grid-template-columns: 39px 36px 1fr; gap: 1px 4px; padding: 4px 3px 4px 2px; align-items: center; color: #ccc; }
.routing .mid { text-align: center; }
.routing .lab { text-align: center; white-space: nowrap; }
.routing .low { margin-top: 4px; }
.routing .lab.low { text-align: right; }
.bend { grid-column: span 2; height: 15px; border-radius: 2px; background: #5a5a5a; color: #e6e6e6; white-space: nowrap; box-shadow: 0 0 0 1px #2e2e2e; }
.chain { flex: 1; display: flex; flex-direction: column; gap: 1px; padding: 2px; background: #0e0e0e; }
.chain-row { display: flex; align-items: center; gap: 4px; height: 13px; padding: 0 4px 0 2px; background: #363636; font-size: 7px; }
.chain-row i { width: 6px; height: 6px; border-radius: 50%; background: #e6d24a; }
.chain-row span { flex: 1; }
.plus { color: #8c8c8c; font-size: 15px; line-height: 16px; }
.latency { margin-top: auto; line-height: 9px; text-align: center; color: #ddd088; }
.send { display: flex; align-items: center; justify-content: space-between; height: 33px; padding: 0 5px; color: #767676; border-bottom: 1px solid #2e2e2e; font-size: 7px; }
.drop.dim { width: 34px; background: #4a4a4a; color: #888; font-size: 9px; }
.drop.dim::after { border-top-color: #888; }
.io { display: flex; flex-direction: column; gap: 5px; padding: 3px 3px 4px; }
.io-ic { width: 8px; height: 8px; margin-left: 3px; }
.yellow { color: #d8cc50; }
.mixer { display: flex; height: 147px; }
.mix-left { display: flex; flex-direction: column; align-items: center; gap: 4px; width: 51px; padding: 10px 8px 4px; }
.mix-left .knob { margin-bottom: auto; }
.mix-left button { width: 35px; height: 20px; border-radius: 2px; background: linear-gradient(#6a6a6a, #565656); box-shadow: 0 0 0 1px #2c2c2c; font-weight: 700; }
.mix-left .arm { background: #e00808; }
.arm::after { content: ""; width: 7px; height: 7px; border-radius: 50%; background: #2a0000; }
.mix-right { flex: 1; display: flex; flex-direction: column; padding: 2px 5px 4px; background: #1f1f1f; }
.db { text-align: right; color: #ccc; }
.mix-cols { flex: 1; display: flex; gap: 7px; padding-top: 3px; }
.vol { width: 21px; height: 88px; align-self: flex-end; background: #57351a; border-top: 2px solid #8a7058; }
.bigmeter { display: flex; align-items: flex-end; gap: 1px; width: 21px; background: #2c2c2c; }
.bigmeter i { flex: 1; background: linear-gradient(#8ad038, #2f8a34); box-shadow: 0 -14px 0 -13px #a8b840; }
.scale { flex: 1; display: flex; flex-direction: column; justify-content: space-between; text-align: right; color: #b0b0b0; font-size: 8px; line-height: 9px; }
.scale li:last-child { padding-top: 4px; }

/* arranger */
.center { display: flex; flex-direction: column; gap: 3px; min-width: 0; margin-left: 1px; }
.arranger { flex: 1; display: flex; flex-direction: column; border: 2px solid #6a6a6a; border-radius: 2px; background: #3c3c3c; min-height: 0; }
.arr-head { display: flex; height: 32px; }
.head-tools { display: flex; width: 160px; background: #464646; border-right: 1px solid #222; }
.head-tools button { width: 30px; }
.head-tools .lit { background: #2a2a2a; }
.head-tools .fill { flex: 1; background: #3c3c3c; }
.head-tools .faint { width: 22px; color: #5e5e5e; }
.head-tools .pointer { gap: 2px; color: #888; }
.pointer svg { width: 12px; height: 14px; }
.ruler { flex: 1; display: flex; flex-direction: column; min-width: 0; background: #2b2b2b; padding-top: 9px; }
.ruler svg { width: 100%; height: 11px; }
.bars { display: grid; grid-template-columns: 144fr 175fr 175fr 175fr 54fr; color: #ddd; font-size: 10px; }
.bars span { padding-left: 1px; }
.arr-body { flex: 1; display: flex; min-height: 0; }
.tracks { display: flex; flex-direction: column; width: 160px; background: #0e0e0e; }
.track { position: relative; display: grid; grid-template-columns: 12px 1fr 16px 16px 16px 9px; grid-template-rows: 12px 13px; gap: 3px; align-items: center; height: 35px; padding: 3px 3px 2px 4px; border-left: 6px solid var(--c); border-bottom: 1px solid #1c1c1c; background: #4a4a4a; }
.track.selected { background: #949494; }
.track.selected .tname { color: #1c1c1c; }
.track.selected .tic { color: #444; }
.tname { grid-column: span 2; white-space: nowrap; }
.tic { width: 12px; height: 12px; color: #aaa; }
.track button { height: 12px; border-radius: 2px; background: #666; box-shadow: 0 0 0 1px #333; font-weight: 700; }
.rec::after { content: ""; width: 8px; height: 8px; border-radius: 50%; background: #fff; }
.rec.off::after { background: #999; }
.track .rec.off { background: #505050; }
.track .rec.armed { background: #d8000c; }
.rec.armed::after { background: #300; }
.fader { grid-column: span 3; width: 100%; height: 13px; border: 1px solid #111; border-radius: 2px; --t: #ea6a30; background: linear-gradient(90deg, #57351a calc(var(--v) - 1px), var(--t) 0 calc(var(--v) + 1px), #1c1c1c 0); }
.fader.grey { --t: #9a8068; }
.fader::-webkit-slider-thumb { appearance: none; width: 2px; height: 11px; }
.meter { display: flex; align-items: flex-end; gap: 1px; background: #181818; width: 9px; }
.track .meter { grid-column: 6; grid-row: 1 / 3; align-self: stretch; }
.meter i { flex: 1; background: linear-gradient(#8fd85a, #3f9a38); }
.meter.hot i { border-top: 2px solid #c85028; }
.cursor { position: absolute; left: 8px; top: 9px; width: 12px; height: 15px; }
.add-track { flex: 1; align-items: flex-start; }
.timeline { position: relative; flex: 1; display: flex; flex-direction: column; min-width: 0; background: #989898; }
.gridlines { position: absolute; inset: 0; width: 100%; height: 100%; }
.lane { display: flex; height: 35px; border-bottom: 1px solid #777; }
.void { flex: 1; background: rgba(0, 0, 0, .14); border-bottom: 1px solid #777; }
.clip { position: relative; display: flex; flex-direction: column; background: var(--c); }
.clip.a { width: 68.300%; }
.clip.b { width: 31.700%; }
.clip b { height: 17px; padding: 4px 5px 0; font-weight: 400; color: rgba(0, 0, 0, .75); background: var(--h); }
.clip svg { width: 100%; height: 17px; }
.arr-foot { display: flex; align-items: center; gap: 5px; height: 18px; padding-right: 1px; }
.foot-tools { display: flex; gap: 4px; width: 158px; padding-left: 2px; }
.arrow { font-size: 7px; color: #999; }
.hscroll { flex: 1; padding: 0 0 0 254px; }
.hscroll i { display: block; width: 22px; height: 10px; background: #8c8c8c; border-radius: 2px; }
.snap { margin-left: 42px; white-space: nowrap; }

/* device rack */
.devices { position: relative; display: flex; flex-direction: column; height: 197px; padding: 0 2px 0 0; border: 2px solid #4c4c4c; border-left: 0; background: #0e0e0e; }
.minimap { position: absolute; right: 0; top: 3px; width: 50px; height: 4px; background: #777; }
.rack { flex: 1; display: flex; min-height: 0; margin-left: 1px; padding: 0; border-left: 3px solid #b8925f; }
.vert { writing-mode: vertical-rl; transform: rotate(180deg); white-space: nowrap; }
.rack-name { display: flex; align-items: center; width: 22px; padding-left: 5px; }
.slot { display: flex; flex-direction: column; align-items: center; justify-content: space-between; width: 17px; padding: 16px 0 11px; }
.led { width: 7px; height: 7px; background: #e0cc40; }
.slot .meter { width: 8px; height: 22px; background: none; }
.slot .led { margin-bottom: 15px; }
.device { display: flex; gap: 3px; margin: 9px 0 6px; border-radius: 4px; background: #484848; overflow: hidden; padding: 2px 2px 2px 0; }
.device.grow { flex: 1; min-width: 0; }
.spine { display: flex; flex-direction: column; align-items: center; gap: 5px; width: 21px; margin: -2px 0; padding: 5px 0 3px; background: #333; color: #a0a0a0; }
.spine .vert { margin: auto 0; color: #e6e6e6; }
.spine .ic { height: 11px; }
.spine .lit { color: #e0702a; }
.plugin { width: 137px; display: flex; flex-direction: column; }
.psearch { display: flex; align-items: center; gap: 5px; height: 18px; padding: 0 3px; }
.sbox { flex: 1; display: flex; align-items: center; height: 17px; padding: 0 4px; border-radius: 3px; background: #1a1a1a; min-width: 0; }
.sbox input { flex: 1; min-width: 0; width: 0; }
.sic { width: 14px; height: 12px; }
.param { display: flex; align-items: center; gap: 5px; height: 24px; padding: 0 4px; line-height: 10px; border-bottom: 1px solid #2e2e2e; }
.param.first { height: 27px; margin: 2px 0; background: #3c3c3c; }
.params { flex: 1; background: #262626; border-right: 2px solid #555; overflow: hidden; }
.remote { display: flex; flex-direction: column; gap: 2px; width: 177px; }
.page { display: flex; align-items: center; gap: 3px; height: 17px; padding-left: 4px; background: #1c1c1c; border-radius: 2px; white-space: nowrap; }
.page span { flex: 1; }
.page em { font-style: normal; color: #8c8c8c; }
.page button { width: 15px; height: 15px; background: #666; font-size: 7px; }
.page button + button { margin-left: -2px; }
.pads { flex: 1; display: grid; grid-template-columns: repeat(4, 1fr); grid-template-rows: 1fr 1fr; gap: 2px; }
.pad { position: relative; display: flex; flex-direction: column; align-items: center; justify-content: flex-end; gap: 2px; padding-bottom: 4px; background: #383838; border-bottom: 3px solid var(--u); white-space: nowrap; }
.mod { position: absolute; top: 5px; width: 14px; height: 6px; }
.drop.time { width: 37px; height: 19px; margin-bottom: 8px; }
.spectrum { flex: 1; display: flex; flex-direction: column; min-width: 0; margin: 0 0 0 3px; background: #1a1a1a; border-radius: 3px; }
.spectrum svg { width: 100%; flex: 1; min-height: 0; }
.spectrum text { font: 700 21px Lato, sans-serif; fill: #2a0c40; }
.srow { display: grid; grid-template-columns: 30px 60px 1fr 42px; height: 17px; padding: 4px 6px 0 7px; white-space: nowrap; }
.srow .r { text-align: right; padding-right: 6px; }
.srow output { color: #a855e8; }
.srow output:last-child { text-align: right; }
.bands { display: flex; flex-direction: column; justify-content: space-between; gap: 2px; width: 132px; }
.band { flex: 1; display: flex; align-items: center; justify-content: space-between; padding: 0 3px 0 6px; background: #383838; }
.solo { color: #999; }
.kb { display: flex; flex-direction: column; align-items: center; gap: 1px; color: var(--k); }
.kb svg { width: 8px; height: 8px; }
.kb .panic { width: 12px; color: #777; }
.layer { width: 35px; height: 36px; background: linear-gradient(#2c2c2c, #2c2c2c) 4px 0 / 5px 100% no-repeat #1c1c1c; border: 1px solid #141414; border-top: 3px solid var(--t); border-radius: 2px; }
.layer.flat { background: #1c1c1c; }
.band .meter { width: 10px; height: 35px; }
.brow { display: grid; grid-template-columns: 21px 58px 1fr; align-items: center; height: 16px; padding-left: 6px; background: #222; color: #ccc; white-space: nowrap; }
.bi { color: #888; }
.updown { width: 8px; height: 12px; }
.org { color: #d0702e; }
sup { font-size: 5px; line-height: 0; }
.fxcol { display: flex; flex-direction: column; gap: 3px; width: 54px; }
.fxcol .layer { width: 100%; height: 29px; }
.mixbox { flex: 1; display: flex; flex-direction: column; align-items: center; justify-content: flex-end; gap: 2px; padding-bottom: 3px; background: #383838; }
.device.cut { width: 37px; padding-right: 0; border-radius: 4px 0 0 4px; }
.stubs { flex: 1; display: grid; grid-template-rows: 1fr 1fr 1fr; gap: 2px; color: #888; font-size: 14px; overflow: hidden; }
.stubs span { display: flex; align-items: center; justify-content: flex-end; background: #383838; border-radius: 4px 0 0 4px; }
.rackscroll { height: 3px; padding-left: 25px; }
.rackscroll i { display: block; width: 80%; height: 3px; background: #555; }

/* browser */
.browser { display: flex; flex-direction: column; padding: 1px; background: #3c3c3c; border: 1px solid #4a4a4a; border-radius: 3px; min-width: 0; }
.browser h2 { padding: 3px 5px 2px; font-weight: 700; white-space: nowrap; }
.kinds { display: flex; justify-content: space-between; padding: 0 1px; height: 18px; }
.kinds button { width: 14px; }
.kinds svg { width: 12px; height: 12px; }
.browser .sbox { flex: none; height: 17px; margin-bottom: 4px; }
.browser h3 { display: flex; gap: 5px; height: 15px; line-height: 15px; margin-bottom: 1px; padding-left: 5px; background: #484848; }
.browser h3 i { font-style: normal; font-weight: 700; }
.locations { height: 179px; padding: 2px 1px; background: #0e0e0e; }
.locations li { position: relative; display: flex; align-items: center; gap: 4px; height: 16px; padding: 0 3px; white-space: nowrap; }
.locations svg, .cats svg { width: 12px; height: 12px; }
.locations span { flex: 1; }
.locations small { color: #8c8c8c; min-width: 12px; text-align: center; }
.locations .sel { background: #24333a; }
.locations .in1 { padding-left: 15px; }
.locations .in2 { padding-left: 23px; }
.locations .open::before { content: "▼"; position: absolute; left: 2px; font-size: 7px; color: #aaa; }
.catbox { flex: 1 1 0; position: relative; min-height: 0; overflow: hidden; background: #0e0e0e; padding-top: 4px; }
.cats li { display: flex; align-items: center; gap: 5px; height: 16px; padding: 0 11px 0 4px; white-space: nowrap; }
.cats span { flex: 1; }
.cats .st { width: 9px; height: 9px; color: #453f22; }
.vscroll { position: absolute; right: 0; top: 0; width: 3px; height: 40px; background: #555; }
.redundant { height: 18px; background: #1a1a1a; color: #808080; white-space: nowrap; }
.meta { height: 27px; margin-top: 2px; padding: 3px 4px; line-height: 10px; background: #1c1c1c; }

/* status bar */
.status { display: flex; align-items: center; gap: 12px; height: 30px; padding: 0 4px 0 12px; white-space: nowrap; }
.info { color: #e0702a; font-size: 10px; }
.sep { flex: none; width: 1px; height: 14px; background: #888; }
.cur { color: #e0702a; }
.views { display: flex; gap: 13px; }
.views svg, .lastic { width: 12px; height: 12px; color: #bbb; }
.views .lit { color: #e0702a; }
.hints { flex: 1; display: flex; gap: 16px; margin-left: 7px; }
.hints div { display: flex; gap: 6px; }
.hints dt { font-size: 8px; }
.hints dd { color: #8c8c8c; }
```
